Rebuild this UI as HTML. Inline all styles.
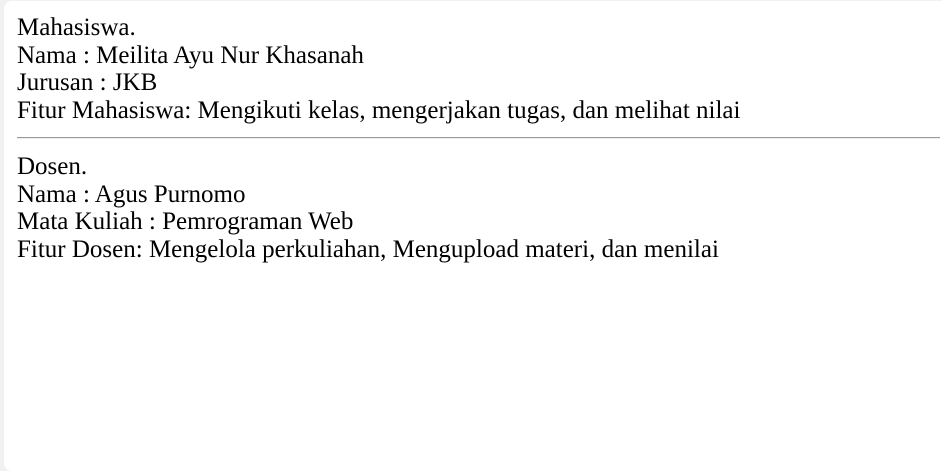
<!DOCTYPE html>
<html><head><style>
html,body{margin:0;padding:0;background:#f1f1f1;width:942px;height:455px;overflow:hidden}
.p{position:absolute;left:4px;top:1px;width:950px;height:470px;background:#fff;border-radius:8px}
.t{position:absolute;left:17px;font-family:"Liberation Serif",serif;font-size:25px;line-height:27.6px;color:#000;white-space:nowrap}
.hr{position:absolute;left:17px;top:137px;width:923px;height:0;border-top:1px solid #9a9a9a;border-bottom:1px solid #eee}
</style></head><body>
<div class="p"></div>
<div class="t" style="top:14px">Mahasiswa.<br>Nama : Meilita Ayu Nur Khasanah<br>Jurusan : JKB<br>Fitur Mahasiswa: Mengikuti kelas, mengerjakan tugas, dan melihat nilai</div>
<div class="hr"></div>
<div class="t" style="top:153px">Dosen.<br>Nama : Agus Purnomo<br>Mata Kuliah : Pemrograman Web<br>Fitur Dosen: Mengelola perkuliahan, Mengupload materi, dan menilai</div>
</body></html>
